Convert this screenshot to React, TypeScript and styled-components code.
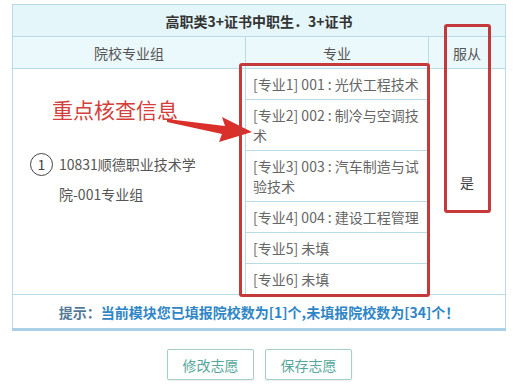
import React from "react";
import styled, { createGlobalStyle } from "styled-components";

const majors = [
  "[专业1] 001 : 光伏工程技术",
  "[专业2] 002 : 制冷与空调技术",
  "[专业3] 003 : 汽车制造与试验技术",
  "[专业4] 004 : 建设工程管理",
  "[专业5] 未填",
  "[专业6] 未填",
];

const App = () => {
  return (
    <>
      <GlobalStyle />
      <Page>
        <TableWrap>
          <Table>
            <colgroup>
              <col style={{ width: 233 }} />
              <col style={{ width: 183 }} />
              <col style={{ width: 77 }} />
            </colgroup>
            <tbody>
              <tr>
                <TitleCell colSpan={3}>高职类3+证书中职生．3+证书</TitleCell>
              </tr>
              <tr>
                <HeadCell>院校专业组</HeadCell>
                <HeadCell>专业</HeadCell>
                <HeadCell>服从</HeadCell>
              </tr>
              <tr>
                <SchoolCell>
                  <School>
                    <Circled>1</Circled>
                    <SchoolName>10831顺德职业技术学院-001专业组</SchoolName>
                  </School>
                </SchoolCell>
                <MajorCell>
                  {majors.map((m, i) => (
                    <Major key={i} $last={i === majors.length - 1}>
                      {m}
                    </Major>
                  ))}
                </MajorCell>
                <ObeyCell>是</ObeyCell>
              </tr>
              <tr>
                <TipCell colSpan={3}>
                  <TipLabel>提示：</TipLabel>当前模块您已填报院校数为[1]个,未填报院校数为[34]个！
                </TipCell>
              </tr>
            </tbody>
          </Table>

          <Note>重点核查信息</Note>
          <Arrow width="90" height="34" viewBox="0 0 90 34">
            <polygon points="2,8 60,15 57,6 87,21 54,31 57,23 2,11" fill="#d9302c" />
          </Arrow>
          <MarkBox $left={227} $top={59} $width={191} $height={234} />
          <MarkBox $left={432} $top={20} $width={47} $height={189} />
        </TableWrap>

        <Buttons>
          <Button>修改志愿</Button>
          <Button>保存志愿</Button>
        </Buttons>
      </Page>
    </>
  );
};

const GlobalStyle = createGlobalStyle`
  body {
    margin: 0;
    background: #fff;
    font-family: "Noto Sans CJK SC", "Noto Sans", sans-serif;
  }
`;

const Page = styled.div`
  width: 516px;
  height: 386px;
  padding-top: 4px;
  box-sizing: border-box;
  overflow: hidden;
`;

const TableWrap = styled.div`
  position: relative;
  margin-left: 12px;
  width: 494px;
`;

const Table = styled.table`
  width: 494px;
  table-layout: fixed;
  border-collapse: collapse;
  border: 1px solid #b7dce3;
  border-bottom: 3px solid #a9d0e4;
  color: #555;
  font-size: 14px;

  td {
    border: 1px solid #b7dce3;
    padding: 0;
  }
`;

const TitleCell = styled.td`
  height: 31px;
  background: #e4f6fa;
  text-align: center;
  font-weight: bold;
  color: #333;
`;

const HeadCell = styled.td`
  height: 31px;
  background: #ecf9fc;
  text-align: center;
  color: #555;
`;

const SchoolCell = styled.td`
  vertical-align: middle;
  padding: 0 0 6px 17px !important;
`;

const School = styled.div`
  display: flex;
  align-items: flex-start;
`;

const Circled = styled.span`
  flex: none;
  width: 21px;
  height: 21px;
  margin-top: 4px;
  margin-right: 6px;
  border: 1px solid #444;
  border-radius: 50%;
  display: flex;
  align-items: center;
  justify-content: center;
  font-size: 14px;
  line-height: 1;
  color: #444;
`;

const SchoolName = styled.span`
  width: 142px;
  font-size: 14px;
  line-height: 30px;
  color: #555;
`;

const MajorCell = styled.td`
  vertical-align: top;
`;

const Major = styled.div<{ $last: boolean }>`
  padding: 5px 8px 5px 7px;
  line-height: 20px;
  font-size: 14px;
  color: #666;
  border-bottom: ${(p) => (p.$last ? "none" : "1px solid #b7dce3")};
`;

const ObeyCell = styled.td`
  text-align: center;
  vertical-align: middle;
  color: #444;
`;

const TipCell = styled.td`
  height: 33px;
  text-align: center;
  font-weight: bold;
  color: #2f86c6;
`;

const TipLabel = styled.span`
  color: #557a99;
`;

const Note = styled.div`
  position: absolute;
  left: 40px;
  top: 93px;
  font-size: 21px;
  line-height: 24px;
  color: #d3403c;
`;

const Arrow = styled.svg`
  position: absolute;
  left: 153px;
  top: 107px;
`;

const MarkBox = styled.div<{ $left: number; $top: number; $width: number; $height: number }>`
  position: absolute;
  left: ${(p) => p.$left}px;
  top: ${(p) => p.$top}px;
  width: ${(p) => p.$width}px;
  height: ${(p) => p.$height}px;
  box-sizing: border-box;
  border: 3px solid #c4393a;
  border-radius: 3px;
`;

const Buttons = styled.div`
  display: flex;
  justify-content: center;
  gap: 11px;
  margin-top: 18px;
  padding-left: 3px;
`;

const Button = styled.button`
  width: 87px;
  height: 31px;
  background: #fff;
  border: 1px solid #a3cfc9;
  border-radius: 2px;
  color: #55a79d;
  font-family: "Noto Sans CJK SC", sans-serif;
  font-size: 14px;
  box-shadow: 0 1px 2px rgba(0, 0, 0, 0.08);
  cursor: pointer;
`;

export default App;
